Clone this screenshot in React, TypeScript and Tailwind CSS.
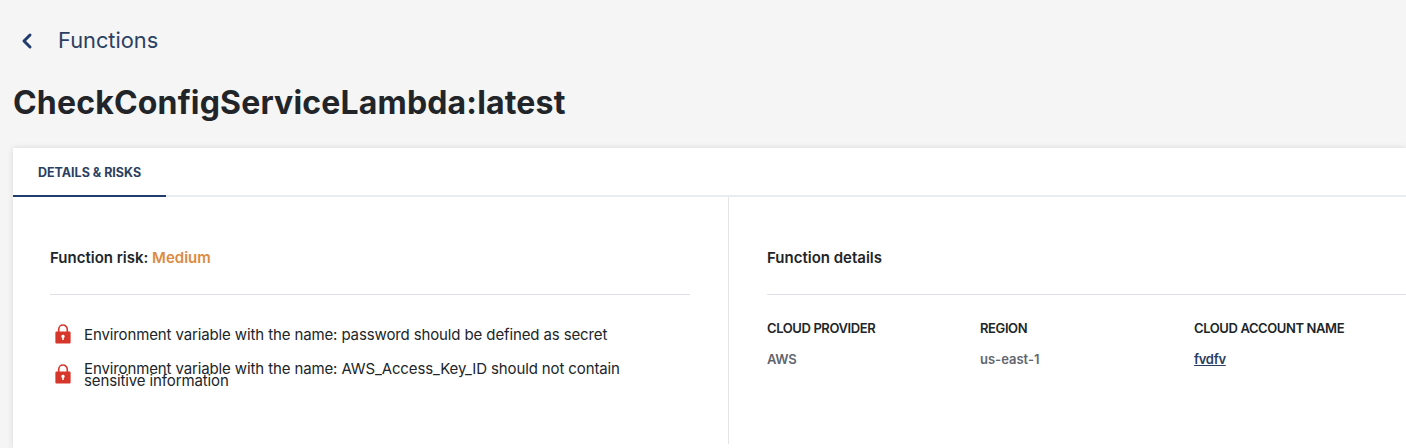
import { ChevronLeft } from "lucide-react";

const FONT = "font-['Inter','Liberation_Sans',sans-serif]";

const Lock = () => (
  <svg viewBox="0 0 16 21" className="h-[20px] w-4 shrink-0 -translate-y-[1px]" aria-hidden="true">
    <path d="M3.5 9V5.6a4.5 4.5 0 0 1 9 0V9" fill="none" stroke="#d7372b" strokeWidth="1.7" />
    <path
      fillRule="evenodd"
      fill="#d7372b"
      d="M1.2 8h13.6c.7 0 1.2.5 1.2 1.2v10.1c0 .7-.5 1.2-1.2 1.2H1.2C.5 20.500 0 20 0 19.300V9.200C0 8.500.5 8 1.200 8ZM8 11.200a1.800 1.800 0 0 0-.8 3.400v2.300h1.600v-2.300A1.800 1.800 0 0 0 8 11.200Z"
    />
  </svg>
);

const RISKS = [
  "Environment variable with the name: password should be defined as secret",
  "Environment variable with the name: AWS_Access_Key_ID should not contain sensitive information",
];

const DETAILS = [
  { label: "CLOUD PROVIDER", value: "AWS", width: "w-[213px]", cls: "text-[#5f6670] font-semibold tracking-[-0.3px]" },
  { label: "REGION", value: "us-east-1", width: "w-[214px]", cls: "text-[#5f6670] font-semibold tracking-[0px]" },
  { label: "CLOUD ACCOUNT NAME", value: "fvdfv", width: "w-[180px]", cls: "text-[#2b3d5f] font-semibold underline tracking-[-0.3px]" },
];

export default function App() {
  return (
    <div className={`${FONT} h-[448px] w-[1406px] overflow-hidden bg-[#f5f5f5] pl-[13px] text-[#212529]`}>
      <div className="flex h-[80px] items-center pt-[1px]">
        <ChevronLeft className="ml-[2px] h-[24px] w-[24px] text-[#223c6e]" strokeWidth={3} />
        <span className="ml-[19px] text-[21.8px] text-[#2b3f63]">Functions</span>
      </div>
      <h1 className="h-[68px] text-[32px] leading-[46px] font-bold tracking-[0.17px] text-[#212529]">
        CheckConfigServiceLambda:latest
      </h1>
      <div className="h-[300px] bg-white shadow-[0_0_6px_rgba(0,0,0,0.12)]">
        <div className="flex h-[49px] border-b-2 border-[#e9ecef]">
          <div className="-mb-[2px] flex h-[49px] w-[153px] items-center justify-center border-b-2 border-[#223c6e] pt-[3px] text-[12.5px] font-bold text-[#2b3f63]">
            DETAILS &amp; RISKS
          </div>
        </div>
        <div className="flex h-[247px]">
          <div className="w-[716px] border-r border-[#e2e4e8] pt-[50px] pl-[37px] pr-[38px]">
            <div className="h-[48px] border-b border-[#dee2e6] text-[15px] leading-[22px] font-semibold">
              Function risk: <span className="text-[#dc8b41]">Medium</span>
            </div>
            <ul className="flex flex-col gap-[18px] pt-[30px]">
              {RISKS.map((risk) => (
                <li key={risk} className="flex items-center gap-[13px] pl-[5px]">
                  <Lock />
                  <span className="w-[560px] text-[15px] leading-[12px] tracking-[-0.12px] text-[#212529]">{risk}</span>
                </li>
              ))}
            </ul>
          </div>
          <div className="flex-1 pt-[50px] pl-[38px]">
            <div className="h-[48px] border-b border-[#dee2e6] text-[15px] leading-[22px] font-semibold">
              Function details
            </div>
            <div className="flex pt-[25px]">
              {DETAILS.map((d) => (
                <div key={d.label} className={d.width}>
                  <div className="text-[13px] leading-[16px] font-semibold tracking-[-0.4px]">{d.label}</div>
                  <div className={`mt-[15px] text-[13px] leading-[16px] ${d.cls}`}>{d.value}</div>
                </div>
              ))}
            </div>
          </div>
        </div>
      </div>
    </div>
  );
}
